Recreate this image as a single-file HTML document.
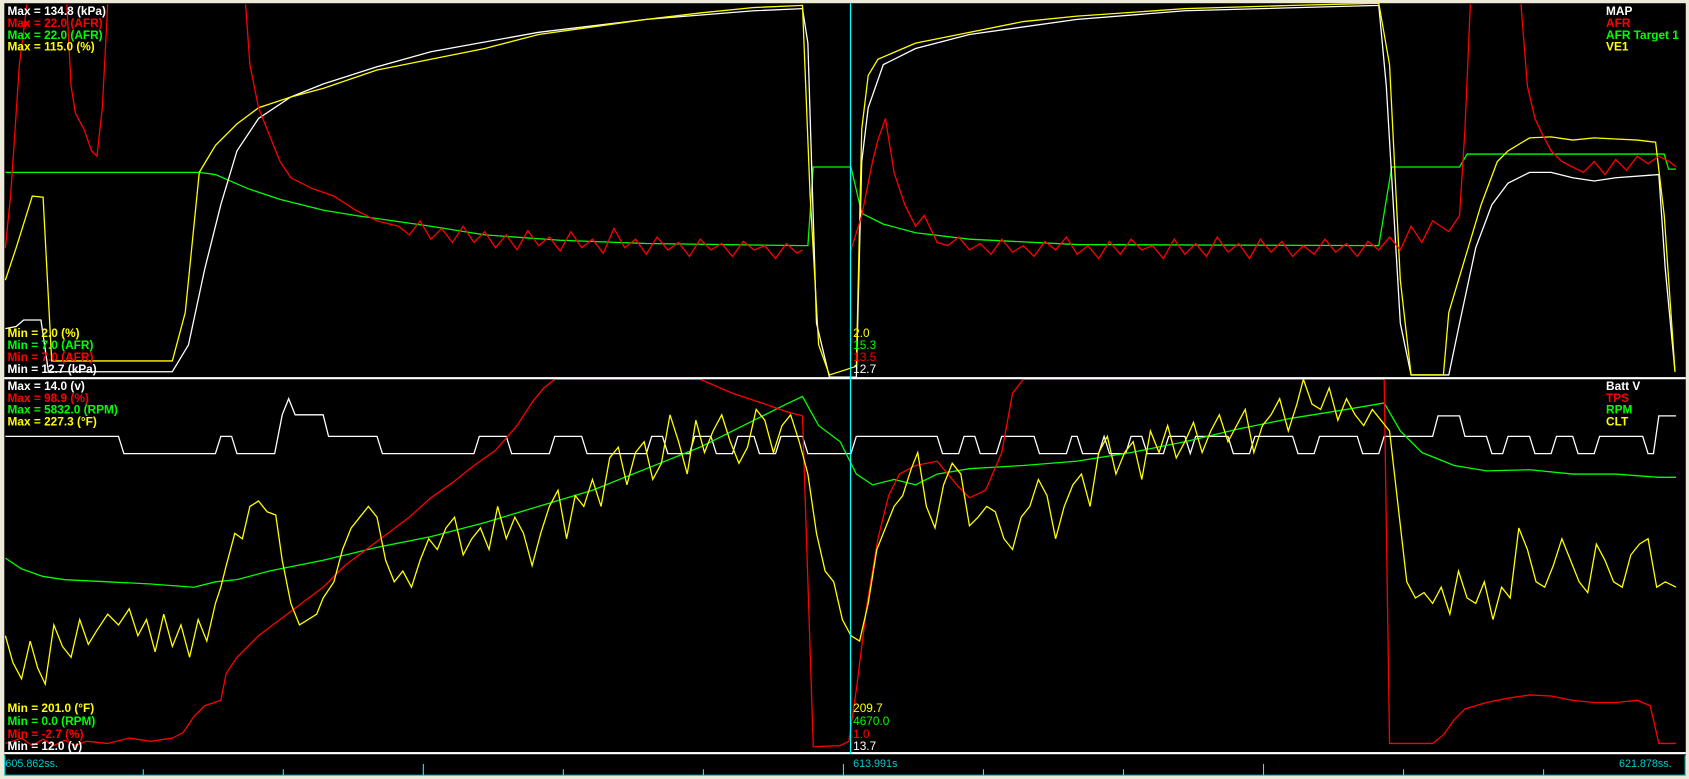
<!DOCTYPE html>
<html><head><meta charset="utf-8"><style>
html,body{margin:0;padding:0;background:#ECE9D8;width:1689px;height:779px;overflow:hidden}
svg{display:block}
text{font-family:"Liberation Sans",Arial,sans-serif}
.b{font-weight:bold;font-size:11px}
.n{font-size:11px}
</style></head><body>
<svg width="1689" height="779" viewBox="0 0 1568 723" preserveAspectRatio="none" xmlns="http://www.w3.org/2000/svg">
<rect x="0" y="0" width="1568" height="723" fill="#ECE9D8"/>
<rect x="4" y="3" width="1561" height="717" fill="#000"/>
<g fill="none" stroke-width="1.2">
<!-- TOP PANEL -->
<polyline stroke="#0f0" points="5,160 185,160 200,162 230,175 260,185 300,195 330,200 400,210 450,218 520,223 600,226 745,228 750,228 755,155 790,155 800,198 820,208 850,216 900,222 1000,227 1280,228 1292,155 1355,155 1362,143 1545,143 1549,157 1556,157"/>
<polyline stroke="#fff" points="5,305 15,303 22,297 38,297 45,345 160,345 175,320 190,250 205,190 220,140 240,110 270,90 300,78 350,62 400,48 500,30 600,18 700,10 745,8 750,40 758,300 770,350 795,350 800,150 806,100 820,60 850,45 900,32 1000,18 1100,10 1280,5 1287,80 1300,300 1310,348 1345,348 1355,300 1370,230 1385,190 1400,170 1420,160 1440,160 1460,165 1480,168 1500,165 1540,162 1546,250 1555,345"/>
<polyline stroke="#ff0" points="5,260 15,230 30,182 40,183 48,335 160,335 172,290 185,160 200,135 220,115 240,100 270,90 300,82 350,65 400,55 450,45 500,32 550,25 600,18 650,12 700,7 745,5 752,180 760,320 770,348 795,340 800,120 806,70 815,55 850,40 900,30 950,20 1000,15 1100,8 1200,5 1280,3 1290,60 1300,260 1310,348 1340,348 1345,290 1360,240 1375,190 1390,150 1400,140 1420,128 1440,127 1460,130 1480,128 1500,129 1520,130 1537,132 1545,200 1555,345"/>
<polyline stroke="#f00" points="5,230 10,180 18,60 25,4 M0,0" />
<polyline stroke="#f00" points="62,4 66,80 70,105 78,120 85,140 90,145 95,100 100,4"/>
<polyline stroke="#f00" points="228,4 232,60 240,100 250,125 260,150 270,165 290,175 310,182 330,195 350,205 370,210 380,218 390,205 400,222 410,212 420,225 430,210 440,225 450,215 460,230 470,218 480,232 490,214 500,228 510,220 520,233 530,215 540,230 550,222 560,235 570,212 580,230 590,222 600,236 610,220 620,232 630,225 640,238 650,222 660,232 670,226 680,238 690,224 700,232 710,228 720,240 730,226 740,235 745,232"/>
<polyline stroke="#f00" points="790,232 800,200 810,150 815,130 822,110 830,160 840,190 850,210 858,200 870,225 880,228 890,220 900,232 910,226 920,236 930,222 940,234 950,228 960,238 970,224 980,232 990,220 1000,236 1010,228 1020,240 1030,224 1040,236 1050,222 1060,232 1070,228 1080,240 1090,222 1100,236 1110,226 1120,238 1130,220 1140,234 1150,226 1160,240 1170,222 1180,234 1190,224 1200,238 1210,228 1220,236 1230,222 1240,234 1250,226 1260,238 1270,224 1280,232 1290,220 1300,232 1310,210 1320,225 1330,205 1345,215 1355,200 1360,120 1365,4"/>
<polyline stroke="#f00" points="1412,4 1418,80 1425,110 1432,125 1440,140 1450,150 1460,155 1470,160 1480,150 1490,162 1500,148 1510,158 1520,145 1530,152 1540,145 1550,150 1556,155"/>
<!-- BOTTOM PANEL -->
<polyline stroke="#fff" points="5,405 110,405 115,421 200,421 205,405 215,405 220,421 255,421 262,385 268,370 274,385 300,385 305,405 350,405 355,421 440,421 445,405 470,405 475,421 510,421 515,405 540,405 545,421 600,421 605,405 615,405 620,421 640,421 645,405 660,405 665,421 680,421 685,405 700,405 705,421 720,421 725,405 745,405 750,421 790,421 795,405 870,405 875,421 890,421 895,405 905,405 910,421 925,421 930,405 960,405 965,421 990,421 995,405 1000,405 1005,421 1020,421 1025,405 1030,421 1045,421 1050,405 1060,405 1065,421 1080,421 1085,405 1100,405 1105,421 1110,405 1140,405 1145,421 1160,421 1165,405 1200,405 1205,421 1220,421 1225,405 1260,405 1265,421 1280,421 1285,405 1330,405 1335,386 1355,386 1360,405 1380,405 1385,421 1395,421 1400,405 1420,405 1425,421 1440,421 1445,405 1460,405 1465,421 1480,421 1485,405 1525,405 1530,421 1535,421 1540,386 1556,386"/>
<polyline stroke="#0f0" points="5,518 20,528 40,535 60,538 100,540 140,542 180,545 200,540 220,538 250,530 300,520 350,508 400,498 450,485 500,470 550,455 600,435 650,415 700,390 730,375 745,368 760,395 780,410 795,440 810,450 830,445 850,450 870,440 900,435 950,432 1000,428 1050,420 1100,410 1150,398 1200,388 1250,380 1285,374 1300,400 1320,420 1350,432 1380,437 1420,436 1460,440 1500,440 1540,443 1556,443"/>
<polyline stroke="#f00" points="5,690 20,685 30,692 40,686 50,692 60,687 70,692 80,688 100,690 120,685 140,688 160,685 170,680 180,665 190,655 205,650 210,625 220,610 240,590 260,575 280,560 300,545 320,525 340,510 360,495 380,480 400,462 420,448 440,432 460,418 480,395 495,372 505,360 515,352 650,352 680,365 710,375 730,382 745,386 755,693 780,692 788,688 795,640 805,560 815,500 825,460 835,440 850,432 870,428 880,440 890,452 900,462 915,455 930,420 940,365 950,352 1285,352 1290,690 1330,690 1340,682 1350,668 1360,658 1380,652 1400,648 1420,645 1440,646 1460,650 1480,652 1500,652 1520,650 1532,655 1540,690 1556,690"/>
<polyline stroke="#ff0" points="5,590 12,615 20,630 28,595 35,620 42,635 50,580 58,600 66,610 74,575 82,598 90,585 100,570 110,580 120,565 128,590 136,575 144,605 152,570 160,600 168,580 176,610 184,575 192,595 200,560 205,545 210,525 218,495 225,500 232,470 240,465 248,475 256,478 262,520 270,560 278,580 286,575 294,570 300,555 310,540 318,510 326,490 334,480 342,470 350,480 358,520 366,540 374,530 382,545 390,520 398,500 406,510 414,490 422,480 430,515 438,500 446,490 454,510 462,470 470,500 478,480 486,495 494,525 502,495 510,470 518,455 526,500 534,460 542,470 550,445 558,470 566,425 574,415 582,450 590,420 598,410 606,445 614,430 622,385 630,410 638,440 646,390 654,420 662,400 670,385 678,410 686,430 694,415 702,380 710,390 718,420 726,395 734,385 742,410 750,440 758,495 766,530 774,540 782,575 790,590 798,595 806,560 814,510 822,490 830,470 838,460 846,435 852,420 860,470 868,490 876,450 884,430 892,440 900,488 908,480 916,470 924,475 932,500 940,510 948,480 956,470 964,445 972,460 980,500 988,470 996,450 1004,440 1012,470 1020,420 1028,405 1036,440 1044,420 1052,410 1060,445 1068,400 1076,420 1084,395 1092,425 1100,410 1108,392 1116,420 1124,400 1132,385 1140,410 1148,395 1156,380 1164,420 1172,395 1180,385 1188,370 1196,400 1204,375 1210,352 1218,375 1226,380 1234,360 1242,390 1250,370 1258,385 1266,395 1274,380 1282,390 1290,400 1298,470 1306,540 1314,555 1322,550 1330,560 1338,545 1346,570 1354,530 1362,555 1370,560 1378,540 1386,575 1394,545 1402,555 1410,490 1418,510 1426,540 1434,545 1442,525 1450,500 1458,520 1466,540 1474,550 1482,505 1490,520 1498,540 1506,545 1514,515 1522,505 1530,500 1538,545 1546,540 1556,545"/>
</g>
<!-- separators -->
<rect x="4" y="350" width="1561" height="2" fill="#fff"/>
<rect x="4" y="698" width="1561" height="2" fill="#fff"/>
<rect x="789" y="3" width="1.2" height="697" fill="#0ff"/>
<!-- timeline -->
<g stroke="#0ff" stroke-width="1">
<line x1="4.5" y1="701" x2="4.5" y2="720"/>
<line x1="1564.5" y1="701" x2="1564.5" y2="720"/>
<line x1="4" y1="719.5" x2="1565" y2="719.5"/>
<line x1="133" y1="714" x2="133" y2="720"/><line x1="263" y1="714" x2="263" y2="720"/>
<line x1="393" y1="709" x2="393" y2="720"/><line x1="523" y1="714" x2="523" y2="720"/>
<line x1="653" y1="714" x2="653" y2="720"/><line x1="783" y1="709" x2="783" y2="720"/>
<line x1="913" y1="714" x2="913" y2="720"/><line x1="1043" y1="714" x2="1043" y2="720"/>
<line x1="1173" y1="709" x2="1173" y2="720"/><line x1="1303" y1="714" x2="1303" y2="720"/>
<line x1="1433" y1="714" x2="1433" y2="720"/>
</g>
<text x="5" y="712" fill="#0cc" font-size="10">605.862ss.</text>
<text x="792" y="712" fill="#0cc" font-size="10">613.991s</text>
<text x="1503" y="712" fill="#0cc" font-size="10">621.878ss.</text>
<!-- labels top -->
<text class="b" x="7" y="14" fill="#fff">Max = 134.8 (kPa)</text>
<text class="b" x="7" y="25" fill="#f00">Max = 22.0 (AFR)</text>
<text class="b" x="7" y="36" fill="#0f0">Max = 22.0 (AFR)</text>
<text class="b" x="7" y="47" fill="#ff0">Max = 115.0 (%)</text>
<text class="b" x="7" y="313" fill="#ff0">Min = 2.0 (%)</text>
<text class="b" x="7" y="324" fill="#0f0">Min = 7.0 (AFR)</text>
<text class="b" x="7" y="335" fill="#f00">Min = 7.0 (AFR)</text>
<text class="b" x="7" y="346" fill="#fff">Min = 12.7 (kPa)</text>
<text class="b" x="1491" y="14" fill="#fff">MAP</text>
<text class="b" x="1491" y="25" fill="#f00">AFR</text>
<text class="b" x="1491" y="36" fill="#0f0">AFR Target 1</text>
<text class="b" x="1491" y="47" fill="#ff0">VE1</text>
<text class="n" x="792" y="313" fill="#ff0">2.0</text>
<text class="n" x="792" y="324" fill="#0f0">15.3</text>
<text class="n" x="792" y="335" fill="#f00">13.5</text>
<text class="n" x="792" y="346" fill="#fff">12.7</text>
<!-- labels bottom -->
<text class="b" x="7" y="362" fill="#fff">Max = 14.0 (v)</text>
<text class="b" x="7" y="373" fill="#f00">Max = 98.9 (%)</text>
<text class="b" x="7" y="384" fill="#0f0">Max = 5832.0 (RPM)</text>
<text class="b" x="7" y="395" fill="#ff0">Max = 227.3 (°F)</text>
<text class="b" x="7" y="661" fill="#ff0">Min = 201.0 (°F)</text>
<text class="b" x="7" y="673" fill="#0f0">Min = 0.0 (RPM)</text>
<text class="b" x="7" y="685" fill="#f00">Min = -2.7 (%)</text>
<text class="b" x="7" y="696" fill="#fff">Min = 12.0 (v)</text>
<text class="b" x="1491" y="362" fill="#fff">Batt V</text>
<text class="b" x="1491" y="373" fill="#f00">TPS</text>
<text class="b" x="1491" y="384" fill="#0f0">RPM</text>
<text class="b" x="1491" y="395" fill="#ff0">CLT</text>
<text class="n" x="792" y="661" fill="#ff0">209.7</text>
<text class="n" x="792" y="673" fill="#0f0">4670.0</text>
<text class="n" x="792" y="685" fill="#f00">1.0</text>
<text class="n" x="792" y="696" fill="#fff">13.7</text>
</svg>
</body></html>
